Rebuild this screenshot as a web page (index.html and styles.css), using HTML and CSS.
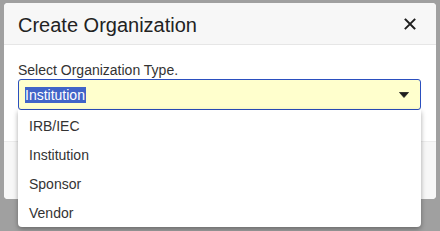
FILE: index.html
```html
<!DOCTYPE html>
<html>
<head>
<meta charset="utf-8">
<link rel="stylesheet" href="styles.css">
</head>
<body>
<div class="modal">
  <div class="modal-header">
    <h2 class="modal-title">Create Organization</h2>
    <button class="close" aria-label="Close">
      <svg width="12" height="12" viewBox="0 0 12 12"><path d="M1.5 1.5 L10.5 10.5 M10.5 1.5 L1.5 10.5" stroke="#1e1e1e" stroke-width="1.9" stroke-linecap="square"/></svg>
    </button>
  </div>
  <div class="modal-body">
    <label class="field-label">Select Organization Type.</label>
    <div class="select">
      <span class="select-value">Institution</span>
      <svg class="caret" width="10" height="6" viewBox="0 0 10 6"><path d="M0.5 0.5 H9.5 L5 5.5 Z" fill="#1e1e1e" stroke="#1e1e1e" stroke-width="0.8" stroke-linejoin="round"/></svg>
    </div>
    <ul class="dropdown">
      <li>IRB/IEC</li>
      <li>Institution</li>
      <li>Sponsor</li>
      <li>Vendor</li>
    </ul>
  </div>
  <div class="modal-footer"></div>
</div>
</body>
</html>
```
FILE: styles.css
```css
html, body {
  margin: 0;
  padding: 0;
  height: 100%;
}
body {
  background: #a0a0a0;
  font-family: "Liberation Sans", Arial, sans-serif;
  color: #333;
  overflow: hidden;
}
.modal {
  margin: 3px 0 0 4px;
  width: 432px;
  height: 196px;
  background: #fff;
  border-radius: 4px;
  display: flex;
  flex-direction: column;
  overflow: visible;
  position: relative;
}
.modal-header {
  height: 41px;
  background: #f7f7f7;
  border-bottom: 1px solid #e6e6e6;
  border-radius: 4px 4px 0 0;
  display: flex;
  align-items: center;
  justify-content: space-between;
  padding: 0 20px 0 14px;
}
.modal-title {
  margin: 0;
  font-size: 20px;
  font-weight: normal;
  color: #222;
  line-height: 22px;
  padding-top: 2px;
}
.close {
  border: 0;
  background: none;
  padding: 0;
  width: 12px;
  height: 12px;
  display: flex;
  margin-top: 1px;
}
.modal-body {
  padding: 17px 15px 31px 14px;
  position: relative;
}
.field-label {
  display: block;
  font-size: 14px;
  line-height: 16px;
  color: #333;
}
.select {
  margin-top: 1px;
  height: 31px;
  box-sizing: border-box;
  border: 1px solid #2b4fbf;
  border-radius: 3px;
  background: #ffffcd;
  display: flex;
  align-items: center;
  justify-content: space-between;
  padding: 0 11px 0 6px;
}
.select-value {
  font-size: 14px;
  line-height: 16px;
  background: #4164c8;
  color: #fff;
  padding: 0 1px 0 0;
}
.caret {
  display: block;
  margin-top: 1px;
}
.dropdown {
  position: absolute;
  left: 14px;
  top: 65px;
  width: 403px;
  margin: 0;
  padding: 1px 0 0;
  list-style: none;
  background: #fff;
  border-radius: 0 0 4px 4px;
  box-shadow: 0 2px 5px rgba(0,0,0,0.35);
  z-index: 2;
}
.dropdown li {
  height: 29px;
  box-sizing: border-box;
  padding: 2px 0 0 11px;
  line-height: 27px;
  font-size: 14px;
  color: #333;
}
.modal-footer {
  flex: 1;
  background: #f7f7f7;
  border-top: 1px solid #ececec;
  border-radius: 0 0 4px 4px;
}
```
